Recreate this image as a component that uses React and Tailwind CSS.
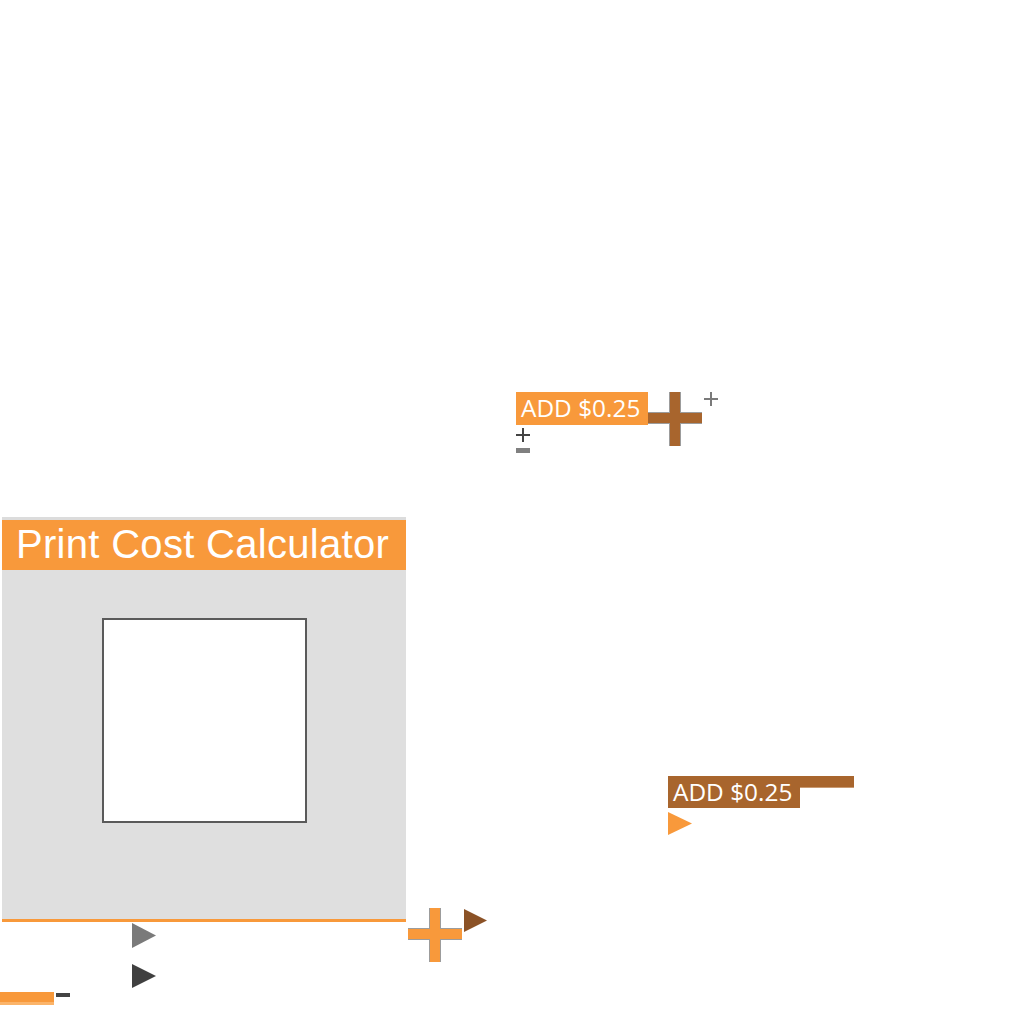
const ORANGE = "#f8993b";
const BROWN = "#a8652d";

function Cross({ color, className = "" }) {
  return (
    <svg className={`shrink-0 ${className}`} width="54" height="54" viewBox="0 0 54 54">
      <rect x="22" y="0" width="10" height="54" fill={color} />
      <rect x="0" y="21" width="54" height="10" fill={color} />
      <g stroke="#9c9c9c" strokeWidth="1">
        <line x1="21.5" y1="0" x2="21.5" y2="21" />
        <line x1="32.5" y1="0" x2="32.5" y2="21" />
        <line x1="21.5" y1="31" x2="21.5" y2="54" />
        <line x1="32.5" y1="31" x2="32.5" y2="54" />
        <line x1="0" y1="20.5" x2="22" y2="20.5" />
        <line x1="32" y1="20.5" x2="54" y2="20.5" />
        <line x1="0" y1="31.5" x2="22" y2="31.5" />
        <line x1="32" y1="31.5" x2="54" y2="31.5" />
      </g>
    </svg>
  );
}

function SmallPlus({ color, className = "" }) {
  return (
    <svg className={`shrink-0 ${className}`} width="14" height="14" viewBox="0 0 14 14">
      <rect x="6" y="0" width="2" height="14" fill={color} />
      <rect x="0" y="6" width="14" height="2" fill={color} />
    </svg>
  );
}

function Arrow({ color, className = "", w = 24, h = 24 }) {
  return (
    <svg className={`shrink-0 ${className}`} width={w} height={h} viewBox={`0 0 ${w} ${h}`}>
      <polygon points={`0,0 ${w},${h / 2} 0,${h}`} fill={color} />
    </svg>
  );
}

function AddTag({ className = "" }) {
  return (
    <div
      className={`w-[132px] pl-[5px] text-[24.4px] leading-[31px] text-white whitespace-nowrap font-['Open_Sans',sans-serif] ${className}`}
    >
      ADD $0.25
    </div>
  );
}

export default function App() {
  return (
    <div className="relative w-[1024px] h-[1024px] bg-white overflow-hidden">
      {/* upper price fragment */}
      <div className="absolute left-[516px] top-[392px] flex items-start">
        <div className="flex flex-col w-[132px]">
          <AddTag className="h-[33px] bg-[#f8993b]" />
          <SmallPlus color="#444444" className="mt-[3px]" />
          <div className="mt-[6px] w-[14px] h-[5px] bg-[#808080]" />
        </div>
        <Cross color={BROWN} />
        <SmallPlus color="#7a7a7a" className="ml-[2px]" />
      </div>

      {/* calculator card and what hangs under it */}
      <div className="absolute left-0 top-[517px] flex flex-col items-start">
        <div className="ml-[2px] w-[404px] border-t-[3px] border-[#dcdcdc]">
          <div className="h-[50px] bg-[#f8993b] pl-[14px] text-white text-[40px] tracking-[0.3px] leading-[49px] whitespace-nowrap font-['Liberation_Sans',Arial,sans-serif]">
            Print Cost Calculator
          </div>
          <div className="h-[352px] bg-[#dfdfdf] border-b-[3px] border-[#f8993b] pt-[48px]">
            <div className="mx-auto w-[205px] h-[205px] bg-white border-2 border-[#5a5a5a]" />
          </div>
        </div>
        <Arrow color="#7a7a7a" w={24} h={25} className="ml-[132px] mt-[1px]" />
        <Arrow color="#404040" w={24} h={24} className="ml-[132px] mt-[16px]" />
        <div className="mt-[4px] flex items-start gap-[2px]">
          <div className="w-[54px] flex flex-col">
            <div className="h-[10px] bg-[#f8993b]" />
            <div className="h-[3px] bg-[#fbb46a]" />
          </div>
          <div className="mt-px w-[14px] h-[4px] bg-[#444444]" />
        </div>
      </div>

      {/* cross and arrow beside the card's bottom edge */}
      <div className="absolute left-[408px] top-[908px] flex items-start gap-[2px]">
        <Cross color={ORANGE} />
        <Arrow color="#8b5226" w={23} h={23} className="mt-px" />
      </div>

      {/* lower price fragment */}
      <div className="absolute left-[668px] top-[776px] flex flex-col">
        <div className="relative w-[186px] h-[32px]">
          <div className="absolute inset-x-0 top-0 h-[12px] flex flex-col">
            <div className="h-[11px] bg-[#a8652d]" />
            <div className="h-[1px] bg-[#c99a72]" />
          </div>
          <AddTag className="relative h-[32px] bg-[#a8652d]" />
        </div>
        <Arrow color={ORANGE} w={24} h={23} className="mt-[4px]" />
      </div>
    </div>
  );
}
